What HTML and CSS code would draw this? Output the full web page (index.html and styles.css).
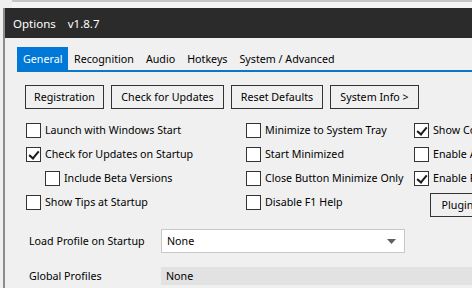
FILE: index.html
```html
<!DOCTYPE html>
<html lang="en">
<head>
    <meta charset="UTF-8">
    <title>Options</title>
    <link rel="stylesheet" href="styles.css">
</head>
<body>
    <div class="topstrip"></div>
    <div class="window">
        <div class="titlebar">
            <span>Options</span>
            <span class="version">v1.8.7</span>
        </div>
        <div class="tabs">
            <div class="tab active">General</div>
            <div class="tab">Recognition</div>
            <div class="tab">Audio</div>
            <div class="tab">Hotkeys</div>
            <div class="tab">System / Advanced</div>
        </div>
        <div class="panel">
            <div class="buttons">
                <button class="btn btn-reg">Registration</button>
                <button class="btn btn-upd">Check for Updates</button>
                <button class="btn btn-reset">Reset Defaults</button>
                <button class="btn btn-info">System Info &gt;</button>
            </div>

            <div class="columns">
                <div class="col col1">
                    <label class="check"><span class="box"></span>Launch with Windows Start</label>
                    <label class="check"><span class="box checked"></span>Check for Updates on Startup</label>
                    <label class="check sub"><span class="box"></span>Include Beta Versions</label>
                    <label class="check"><span class="box"></span>Show Tips at Startup</label>
                </div>
                <div class="col col2">
                    <label class="check"><span class="box"></span>Minimize to System Tray</label>
                    <label class="check"><span class="box"></span>Start Minimized</label>
                    <label class="check"><span class="box"></span>Close Button Minimize Only</label>
                    <label class="check"><span class="box"></span>Disable F1 Help</label>
                </div>
                <div class="col col3">
                    <label class="check"><span class="box checked"></span>Show Console</label>
                    <label class="check"><span class="box"></span>Enable Auto</label>
                    <label class="check"><span class="box checked"></span>Enable Fast</label>
                    <button class="btn btn-plugins">Plugins</button>
                </div>
            </div>

            <div class="field-row">
                <span class="field-label">Load Profile on Startup</span>
                <div class="select">
                    <span>None</span>
                    <svg class="arrow" width="9" height="5" viewBox="0 0 9 5"><path d="M0 0H9L4.5 5Z" fill="#606060"/></svg>
                </div>
            </div>
            <div class="field-row global">
                <span class="field-label">Global Profiles</span>
                <div class="readonly">None</div>
            </div>
        </div>
    </div>
</body>
</html>
```

FILE: styles.css
```css
* {
    box-sizing: border-box;
}
body {
    margin: 0;
    background: #f0f0f0;
    font-family: "Noto Sans", "Open Sans", sans-serif;
    font-size: 10.7px;
    color: #000;
    width: 472px;
    height: 288px;
    overflow: hidden;
}
.topstrip {
    height: 8px;
    margin-left: 12px;
    border-top: 2px solid #c6c6c6;
    background: #f4f4f4;
}
.window {
    margin-left: 3px;
    border-left: 2px solid #8c8c8c;
    height: 280px;
}
.titlebar {
    height: 30px;
    background: #2b2b2b;
    color: #fff;
    font-size: 11.5px;
    display: flex;
    align-items: center;
    padding-left: 8px;
    gap: 12px;
}
.tabs {
    display: flex;
    margin: 9px 0 0 12px;
    border-bottom: 2px solid #0a78c8;
    height: 25px;
}
.tab {
    display: flex;
    align-items: center;
    padding: 0 6px;
}
.tab.active {
    background: #0078d7;
    color: #fff;
    width: 51px;
}
.panel {
    padding: 13px 0 0 20px;
}
.buttons {
    display: flex;
    gap: 7px;
}
.btn {
    font-family: inherit;
    font-size: 10.7px;
    height: 24px;
    border: 1px solid #333;
    background: #f0f0f0;
    padding: 0;
    flex-shrink: 0;
}
.btn-reg { width: 79px; }
.btn-upd { width: 113px; }
.btn-reset { width: 92px; }
.btn-info { width: 89px; }
.columns {
    display: flex;
    margin-top: 13px;
}
.col {
    display: flex;
    flex-direction: column;
    gap: 8px;
    flex-shrink: 0;
}
.col1 { width: 221px; padding-left: 1px; }
.col2 { width: 168px; }
.check {
    display: flex;
    align-items: center;
    height: 16px;
    white-space: nowrap;
}
.check.sub { padding-left: 19px; }
.box {
    width: 15px;
    height: 15px;
    border: 1px solid #333;
    background: #fff;
    margin-right: 4px;
    position: relative;
    flex-shrink: 0;
}
.box.checked::after {
    content: "";
    position: absolute;
    left: 4px;
    top: 1px;
    width: 4px;
    height: 8px;
    border: solid #1a1a1a;
    border-width: 0 2px 2px 0;
    transform: rotate(40deg);
}
.btn-plugins {
    width: 60px;
    margin: -1px 0 0 16px;
}
.field-row {
    display: flex;
    align-items: center;
    margin-top: 12px;
    height: 24px;
}
.field-label {
    width: 136px;
    padding-left: 4px;
    flex-shrink: 0;
}
.select {
    width: 244px;
    height: 24px;
    border: 1px solid #c8c8c8;
    background: #fff;
    display: flex;
    align-items: center;
    justify-content: space-between;
    padding: 0 8px 0 5px;
}
.global {
    margin-top: 14px;
    height: 18px;
}
.readonly {
    flex: 1;
    height: 18px;
    background: #e2e2e2;
    display: flex;
    align-items: center;
    padding-left: 5px;
}
```
